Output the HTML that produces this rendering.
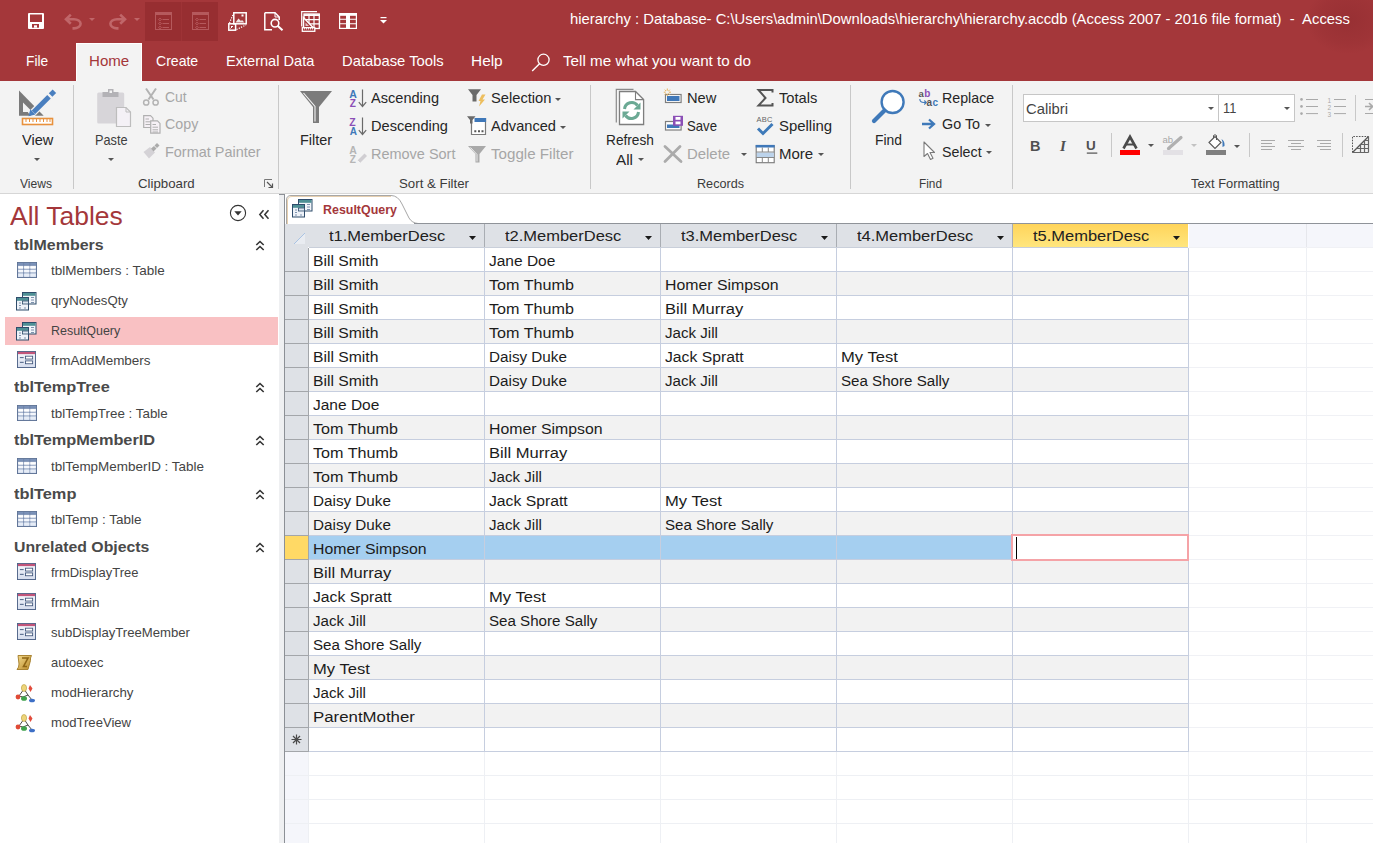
<!DOCTYPE html><html><head><meta charset="utf-8"><style>
html,body{margin:0;padding:0;width:1373px;height:843px;overflow:hidden;background:#fff;position:relative}
body{font-family:"Liberation Sans",sans-serif}
.t{position:absolute;white-space:nowrap}
svg{overflow:visible}
</style></head><body>
<div style="position:absolute;left:0px;top:0px;width:1373px;height:81px;background:#A4373A;"></div>
<div style="position:absolute;left:1290px;top:0;width:83px;height:70px;background:radial-gradient(ellipse 42px 34px at 58px 20px,rgba(120,30,35,0.28),rgba(120,30,35,0.12) 70%,rgba(120,30,35,0) 100%)"></div>
<div style="position:absolute;left:145px;top:2px;width:36px;height:39px;background:#972E31;"></div>
<div style="position:absolute;left:182px;top:2px;width:36px;height:39px;background:#972E31;"></div>
<div class="t" style="left:569.5px;top:12.07px;font-size:14.8px;line-height:14.8px;color:#FFFFFF;transform:scaleX(1.0006);transform-origin:0 0;white-space:pre;">hierarchy : Database- C:\Users\admin\Downloads\hierarchy\hierarchy.accdb (Access 2007 - 2016 file format)  -  Access</div>
<svg style="position:absolute;left:28px;top:13px;" width="16" height="16" viewBox="0 0 16 16"><rect x="0" y="0" width="16" height="16" rx="1" fill="#FFF"/><rect x="2" y="1.5" width="12" height="7.5" fill="#A4373A"/><rect x="4" y="11" width="7" height="3.7" fill="#A4373A"/><rect x="6" y="12.3" width="3" height="2.4" fill="#FFF"/></svg>
<svg style="position:absolute;left:64px;top:13px;" width="19" height="17" viewBox="0 0 19 17"><path d="M6.8 1.6L2 6.2L6.8 10.8M2 6.2H10A6.6 4.6 0 0 1 10 15.4H8.5" fill="none" stroke="#C06669" stroke-width="2.6"/></svg>
<svg style="position:absolute;left:89px;top:18px;" width="6" height="3" viewBox="0 0 6 3"><path d="M0 0H6L3.0 3Z" fill="#C06669"/></svg>
<svg style="position:absolute;left:108px;top:13px;" width="19" height="17" viewBox="0 0 19 17"><path d="M12.2 1.6L17 6.2L12.2 10.8M17 6.2H9A6.6 4.6 0 0 0 9 15.4H10.5" fill="none" stroke="#C06669" stroke-width="2.6"/></svg>
<svg style="position:absolute;left:134px;top:18px;" width="6" height="3" viewBox="0 0 6 3"><path d="M0 0H6L3.0 3Z" fill="#C06669"/></svg>
<div style="position:absolute;left:181px;top:2px;width:1px;height:39px;background:#9E3336;"></div>
<svg style="position:absolute;left:155px;top:12px;" width="17" height="18" viewBox="0 0 17 18"><rect x="0.5" y="0.5" width="16" height="17" fill="none" stroke="#B5595C" stroke-width="1"/><rect x="0.5" y="0.5" width="16" height="2.5" fill="#B5595C"/><path d="M5 6.2l-1.5 1.3L5 8.8l1.5-1.3z M5 10.2l-1.5 1.3L5 12.8l1.5-1.3z M5 14.2l-1.5 1.3L5 16.8l1.5-1.3z" fill="none" stroke="#B5595C" stroke-width="0.9"/><path d="M7.5 7.5H14M7.5 11.5H14M7.5 15.5H14" stroke="#B5595C" stroke-width="1"/></svg>
<svg style="position:absolute;left:192px;top:12px;" width="17" height="18" viewBox="0 0 17 18"><rect x="0.5" y="0.5" width="16" height="17" fill="none" stroke="#B5595C" stroke-width="1"/><rect x="0.5" y="0.5" width="16" height="2.5" fill="#B5595C"/><path d="M5 6.2l-1.5 1.3L5 8.8l1.5-1.3z M5 10.2l-1.5 1.3L5 12.8l1.5-1.3z M5 14.2l-1.5 1.3L5 16.8l1.5-1.3z" fill="none" stroke="#B5595C" stroke-width="0.9"/><path d="M7.5 7.5H14M7.5 11.5H14M7.5 15.5H14" stroke="#B5595C" stroke-width="1"/></svg>
<svg style="position:absolute;left:228px;top:12px;" width="19" height="19" viewBox="0 0 19 19"><rect x="5.8" y="0.8" width="12.4" height="11" fill="none" stroke="#FFF" stroke-width="1.5"/><path d="M7.5 10.5L10.5 6.5L13 9L14 8L16.5 10.5Z" fill="#F2E6E6"/><rect x="13.5" y="2.5" width="2" height="2" fill="#FFF"/><rect x="0.8" y="11.8" width="6.8" height="6.4" fill="none" stroke="#FFF" stroke-width="1.5"/><path d="M2.5 16.5L5 14M3 14.5H5" stroke="#FFF" stroke-width="1"/><path d="M1.5 11L5 2.5M8.5 17.5L18 13" stroke="#FFF" stroke-width="1.2" stroke-dasharray="1.2 1.3"/></svg>
<svg style="position:absolute;left:264px;top:12px;" width="20" height="19" viewBox="0 0 20 19"><path d="M0.8 0.8H11L15.2 5V8M8 17.7H0.8V0.8" fill="none" stroke="#FFF" stroke-width="1.5"/><path d="M11 0.8V5H15.2" fill="none" stroke="#FFF" stroke-width="1"/><circle cx="11" cy="11.2" r="3.8" fill="none" stroke="#FFF" stroke-width="1.6"/><path d="M13.6 13.8L18.5 18.3" stroke="#FFF" stroke-width="2"/></svg>
<svg style="position:absolute;left:301px;top:11px;" width="19" height="21" viewBox="0 0 19 21"><path d="M0.7 15.5V0.7H16" fill="none" stroke="#FFF" stroke-width="1.2"/><rect x="3" y="3" width="15.3" height="14.5" fill="none" stroke="#FFF" stroke-width="1.3"/><path d="M3 3.2H18.3V5H3z" fill="#FFF"/><path d="M3 8.6H18.3M3 12.8H18.3M8 3V17.5M13 3V17.5" stroke="#FFF" stroke-width="1.2"/><path d="M2.5 6.5V17L12.5 17Z" fill="#A4373A" stroke="#FFF" stroke-width="1.5"/><path d="M4.5 11.5V15H8z" fill="#E8C8C8"/><rect x="1.3" y="16.7" width="12.5" height="3.6" fill="#A4373A" stroke="#FFF" stroke-width="1.3"/><path d="M3.5 17V18.5M5.5 17V18.5M7.5 17V18.5M9.5 17V18.5M11.5 17V18.5" stroke="#FFF" stroke-width="0.8"/></svg>
<svg style="position:absolute;left:339px;top:13px;" width="18" height="16" viewBox="0 0 18 16"><rect x="0.6" y="0.6" width="16.8" height="14.8" fill="none" stroke="#FFF" stroke-width="1.2"/><rect x="0.6" y="0.6" width="16.8" height="2.2" fill="#FFF"/><path d="M0.6 6.3H17.4M0.6 10.8H17.4" stroke="#FFF" stroke-width="1.1"/><rect x="7" y="1" width="4" height="14" fill="#FFF"/></svg>
<svg style="position:absolute;left:380px;top:17px;" width="7" height="7" viewBox="0 0 7 7"><rect x="0.5" y="0" width="6" height="1.2" fill="#FFF"/><path d="M0 3H7L3.5 6.5Z" fill="#FFF"/></svg>
<div style="position:absolute;left:76px;top:43px;width:66px;height:38px;background:#F3F3F3;box-sizing:border-box;border:1px solid #FFFFFF;border-bottom:none;"></div>
<div class="t" style="left:25.6px;top:54.27px;font-size:14.8px;line-height:14.8px;color:#FFFFFF;transform:scaleX(0.9267);transform-origin:0 0;">File</div>
<div class="t" style="left:88.6px;top:54.27px;font-size:14.8px;line-height:14.8px;color:#A4373A;transform:scaleX(1.0182);transform-origin:0 0;">Home</div>
<div class="t" style="left:156.3px;top:54.27px;font-size:14.8px;line-height:14.8px;color:#FFFFFF;transform:scaleX(0.9500);transform-origin:0 0;">Create</div>
<div class="t" style="left:226.1px;top:54.27px;font-size:14.8px;line-height:14.8px;color:#FFFFFF;transform:scaleX(0.9847);transform-origin:0 0;">External Data</div>
<div class="t" style="left:342.3px;top:54.27px;font-size:14.8px;line-height:14.8px;color:#FFFFFF;transform:scaleX(0.9995);transform-origin:0 0;">Database Tools</div>
<div class="t" style="left:471.3px;top:54.27px;font-size:14.8px;line-height:14.8px;color:#FFFFFF;transform:scaleX(1.0414);transform-origin:0 0;">Help</div>
<svg style="position:absolute;left:531px;top:53px;" width="20" height="19" viewBox="0 0 20 19"><circle cx="12.5" cy="6.8" r="5.6" fill="none" stroke="#FFF" stroke-width="1.3"/><path d="M8.5 10.8L1.2 18" stroke="#FFF" stroke-width="1.4"/></svg>
<div class="t" style="left:562.8px;top:54.27px;font-size:14.8px;line-height:14.8px;color:#FFFFFF;transform:scaleX(1.0294);transform-origin:0 0;">Tell me what you want to do</div>
<div style="position:absolute;left:0px;top:81px;width:1373px;height:112px;background:#F3F3F3;"></div>
<div style="position:absolute;left:0px;top:193px;width:1373px;height:1px;background:#D6D6D6;"></div>
<div style="position:absolute;left:73px;top:85px;width:1px;height:104px;background:#C8C8C8;"></div>
<div style="position:absolute;left:278px;top:85px;width:1px;height:104px;background:#C8C8C8;"></div>
<div style="position:absolute;left:590px;top:85px;width:1px;height:104px;background:#C8C8C8;"></div>
<div style="position:absolute;left:850px;top:85px;width:1px;height:104px;background:#C8C8C8;"></div>
<div style="position:absolute;left:1012px;top:85px;width:1px;height:104px;background:#C8C8C8;"></div>
<div class="t" style="left:20.2px;top:176.60px;font-size:13px;line-height:13px;color:#3B3B3B;transform:scaleX(0.9290);transform-origin:0 0;">Views</div>
<div class="t" style="left:137.6px;top:176.60px;font-size:13px;line-height:13px;color:#3B3B3B;transform:scaleX(1.0189);transform-origin:0 0;">Clipboard</div>
<div class="t" style="left:399.3px;top:176.60px;font-size:13px;line-height:13px;color:#3B3B3B;transform:scaleX(1.0200);transform-origin:0 0;">Sort &amp; Filter</div>
<div class="t" style="left:697px;top:176.60px;font-size:13px;line-height:13px;color:#3B3B3B;transform:scaleX(0.9709);transform-origin:0 0;">Records</div>
<div class="t" style="left:919.4px;top:176.60px;font-size:13px;line-height:13px;color:#3B3B3B;transform:scaleX(0.9094);transform-origin:0 0;">Find</div>
<div class="t" style="left:1191px;top:176.60px;font-size:13px;line-height:13px;color:#3B3B3B;transform:scaleX(0.9890);transform-origin:0 0;">Text Formatting</div>
<svg style="position:absolute;left:18px;top:88px;" width="38" height="38" viewBox="0 0 38 38"><path d="M1 2.5V27.7H25.7Z" fill="#7A7A7A"/><path d="M5 14.5V24H14.5Z" fill="#F3F3F3"/><path d="M12.5 27.2L34 5.7" stroke="#F3F3F3" stroke-width="7.5"/><path d="M15.5 24.2L31 8.7" stroke="#4A7FBF" stroke-width="5"/><path d="M32.6 7.1L36.4 3.3" stroke="#4A7FBF" stroke-width="5"/><path d="M10.5 28.2L12.3 21.2L17.5 26.4Z" fill="#4A7FBF"/><rect x="4.5" y="30.5" width="30" height="6" fill="#FFFFFF" stroke="#E8913C" stroke-width="1.6"/><path d="M8 31V34M11.5 31V34M15 31V34M18.5 31V34M22 31V34M25.5 31V34M29 31V34M32 31V34" stroke="#E8913C" stroke-width="1"/></svg>
<svg style="position:absolute;left:96px;top:88px;" width="36" height="40" viewBox="0 0 36 40"><rect x="1.2" y="4.5" width="27" height="31" rx="1.5" fill="#D7D5D9"/><path d="M6.5 4H22.5V9H6.5Z" fill="#B3B2B6"/><rect x="12" y="1" width="5.5" height="5" fill="#B3B2B6"/><rect x="13.5" y="2.5" width="2.5" height="2.5" fill="#F3F3F3"/><path d="M20.5 19.5H30L34.5 24V38.5H20.5Z" fill="#F4F1F6" stroke="#BDBDBD" stroke-width="1.2"/><path d="M30 19.5V24H34.5" fill="none" stroke="#BDBDBD" stroke-width="1"/></svg>
<svg style="position:absolute;left:299px;top:90px;" width="34" height="34" viewBox="0 0 34 34"><path d="M1 1H33L20 17V33H14V17Z" fill="#7B7B7B"/><path d="M4.5 3L16 16.5V31.5" fill="none" stroke="#F3F3F3" stroke-width="1.1"/></svg>
<svg style="position:absolute;left:615px;top:88px;" width="31" height="38" viewBox="0 0 31 38"><path d="M1.3 34.5V1.3H18.5" fill="none" stroke="#8A8A8A" stroke-width="1.2"/><path d="M4.5 36.5V3.5H20.5L28.6 11.6V36.5Z" fill="#FFFFFF" stroke="#7E7E7E" stroke-width="1.3"/><path d="M20.5 3.5V11.6H28.6" fill="none" stroke="#7E7E7E" stroke-width="1.1"/><path d="M9.5 21A7.2 7.2 0 0 1 22.5 17.5" fill="none" stroke="#6BA994" stroke-width="3"/><path d="M25.5 14.5V21.5H18.5Z" fill="#6BA994"/><path d="M23.5 24A7.2 7.2 0 0 1 10.5 27.5" fill="none" stroke="#6BA994" stroke-width="3"/><path d="M7.5 30.5V23.5H14.5Z" fill="#6BA994"/></svg>
<svg style="position:absolute;left:870px;top:89px;" width="36" height="36" viewBox="0 0 36 36"><circle cx="22.6" cy="13" r="11" fill="#FFFFFF" stroke="#3F79B9" stroke-width="2.4"/><path d="M14.5 21.5L4 32" stroke="#3F79B9" stroke-width="4.2" stroke-linecap="round"/></svg>
<svg style="position:absolute;left:142px;top:87px;" width="18" height="20" viewBox="0 0 18 20"><path d="M4 1.5L11.5 12.5M14 1.5L6.5 12.5" stroke="#B3B3B3" stroke-width="2"/><circle cx="4.2" cy="15.5" r="2.6" fill="none" stroke="#B3B3B3" stroke-width="1.5"/><circle cx="13.6" cy="15.5" r="2.6" fill="none" stroke="#B3B3B3" stroke-width="1.5"/></svg>
<svg style="position:absolute;left:142px;top:114px;" width="19" height="20" viewBox="0 0 19 20"><path d="M1.7 1.7H8.5L11 4.2V13.5H1.7Z" fill="#F6F1F6" stroke="#B0B0B0" stroke-width="1.2"/><path d="M3.5 5H7M3.5 7.8H9M3.5 10.5H9" stroke="#B0B0B0" stroke-width="1"/><path d="M8.7 6.9H15.5L18 9.4V19.2H8.7Z" fill="#F6F1F6" stroke="#B0B0B0" stroke-width="1.2"/><path d="M10.5 10.5H14M10.5 13.2H16M10.5 15.8H16M10.5 18H16" stroke="#B0B0B0" stroke-width="1"/></svg>
<svg style="position:absolute;left:142px;top:142px;" width="19" height="18" viewBox="0 0 19 18"><path d="M1.5 10L8 5L13 10.5L7 16.5Z" fill="#D4D2D6"/><path d="M9 6.5L12 4L14.5 6.5L11.5 9.5Z" fill="#ABABAB"/><path d="M12.5 3.5L15 1L17.5 3.5L15 6Z" fill="#ABABAB"/></svg>
<svg style="position:absolute;left:349px;top:89px;" width="18" height="19" viewBox="0 0 18 19"><text x="0.3" y="8.5" font-family="Liberation Sans" font-weight="bold" font-size="10.5" fill="#3F79B9">A</text><text x="0.8" y="17.6" font-family="Liberation Sans" font-weight="bold" font-size="10" fill="#8B4FB6">Z</text><path d="M13.5 0.5V17.5M9.8 13.2L13.5 17.5L17.2 13.2" fill="none" stroke="#6A6A6A" stroke-width="1.2"/></svg>
<svg style="position:absolute;left:349px;top:117px;" width="18" height="19" viewBox="0 0 18 19"><text x="0.3" y="8.5" font-family="Liberation Sans" font-weight="bold" font-size="10.5" fill="#8B4FB6">Z</text><text x="0.8" y="17.6" font-family="Liberation Sans" font-weight="bold" font-size="10" fill="#3F79B9">A</text><path d="M13.5 0.5V17.5M9.8 13.2L13.5 17.5L17.2 13.2" fill="none" stroke="#6A6A6A" stroke-width="1.2"/></svg>
<svg style="position:absolute;left:349px;top:145px;" width="18" height="19" viewBox="0 0 18 19"><text x="0.3" y="8.5" font-family="Liberation Sans" font-weight="bold" font-size="10.5" fill="#B5B5B5">A</text><text x="0.8" y="17.6" font-family="Liberation Sans" font-weight="bold" font-size="10" fill="#B5B5B5">Z</text></svg>
<svg style="position:absolute;left:356px;top:151px;" width="12" height="13" viewBox="0 0 12 13"><path d="M1.5 9.5L8.5 2.5L11 5L4 12Z" fill="#D0CED2"/><path d="M1.5 9.5L4 12" stroke="#F3F3F3" stroke-width="1"/></svg>
<svg style="position:absolute;left:467px;top:88px;" width="20" height="20" viewBox="0 0 20 20"><path d="M1 1.3H14L9.5 7V13.5H5.5V7Z" fill="#6A6A6A"/><path d="M15 6.5H18.5L15.5 11.5H18L12 18.5L13.5 13H11.5Z" fill="#EDBE5E"/></svg>
<svg style="position:absolute;left:466px;top:115px;" width="21" height="21" viewBox="0 0 21 21"><path d="M5.5 4V19.5H19.5V3.5H10" fill="#FFFFFF" stroke="#7A7A7A" stroke-width="1.2"/><rect x="8.5" y="3" width="11.6" height="4" fill="#3F78B9"/><path d="M1 1.2H9.5L6.5 5V8.5H4V5Z" fill="#6A6A6A"/><path d="M8.3 16.3H10.3M12 16.3H14M15.5 16.3H17.5" stroke="#555" stroke-width="2"/></svg>
<svg style="position:absolute;left:467px;top:145px;" width="20" height="19" viewBox="0 0 20 19"><path d="M1 1H19L12.5 9V17.5H8.5V9Z" fill="#A9A9A9"/><path d="M3.5 2.5L10 9.5V16.5" fill="none" stroke="#F3F3F3" stroke-width="0.9"/></svg>
<svg style="position:absolute;left:663px;top:88px;" width="20" height="16" viewBox="0 0 20 16"><rect x="2.5" y="6.5" width="15.6" height="8" fill="#FFFFFF" stroke="#7E7E7E" stroke-width="1.2"/><rect x="4" y="8" width="12.5" height="5" fill="#3F78B9"/><path d="M4.3 0.5V8M0.8 4.2H8M1.8 1.7L6.8 6.7M6.8 1.7L1.8 6.7" stroke="#E8B45C" stroke-width="1"/><circle cx="4.3" cy="4.2" r="1.6" fill="#F3F3F3"/></svg>
<svg style="position:absolute;left:663px;top:115px;" width="21" height="17" viewBox="0 0 21 17"><rect x="2.5" y="6.5" width="15.6" height="8.5" fill="#FFFFFF" stroke="#7E7E7E" stroke-width="1.2"/><rect x="4" y="9.5" width="12.5" height="3.5" fill="#3F78B9"/><rect x="10" y="0.8" width="10" height="10" fill="#8B4FB6"/><rect x="12.5" y="2" width="5" height="2.8" fill="#FFFFFF"/><rect x="12.5" y="6.5" width="5" height="2.8" fill="#FFFFFF"/></svg>
<svg style="position:absolute;left:663px;top:145px;" width="20" height="18" viewBox="0 0 20 18"><path d="M2 1.5L18 16.5M17 1.5L2 16.5" stroke="#ABABAB" stroke-width="2.8" stroke-linecap="round"/></svg>
<svg style="position:absolute;left:757px;top:89px;" width="17" height="18" viewBox="0 0 17 18"><path d="M15.5 3.5V1H1.5L8.5 9L1.5 16.5H15.5V14" fill="none" stroke="#555555" stroke-width="2"/></svg>
<svg style="position:absolute;left:756px;top:115px;" width="19" height="21" viewBox="0 0 19 21"><text x="0.5" y="6.8" font-family="Liberation Sans" font-size="7.5" fill="#666" letter-spacing="0.3">ABC</text><path d="M2 13.5L7 18.5L16.5 9" fill="none" stroke="#3E7AB9" stroke-width="3"/></svg>
<svg style="position:absolute;left:755px;top:144px;" width="21" height="20" viewBox="0 0 21 20"><rect x="1.2" y="1.7" width="18" height="17" fill="#FFFFFF" stroke="#777" stroke-width="1.1"/><rect x="0.7" y="0.9" width="19" height="2.6" fill="#3F78B9"/><rect x="1.8" y="8.5" width="17" height="4.5" fill="#BCD3EB"/><path d="M1.2 8H19.2M1.2 13.5H19.2M7.3 3.5V8M13.3 3.5V8M7.3 13.5V18.5M13.3 13.5V18.5" stroke="#888" stroke-width="1"/></svg>
<svg style="position:absolute;left:918px;top:89px;" width="22" height="18" viewBox="0 0 22 18"><text x="0.5" y="8.2" font-family="Liberation Sans" font-weight="bold" font-size="9.5" fill="#555">a</text><text x="6.3" y="8.2" font-family="Liberation Sans" font-weight="bold" font-size="10" fill="#8B4FB6">b</text><path d="M1.8 10Q1.8 13.5 6 13.5H8.3M6.3 11.5L8.3 13.5L6.3 15.5" fill="none" stroke="#3F79B9" stroke-width="1.1"/><text x="8.6" y="17.2" font-family="Liberation Sans" font-weight="bold" font-size="10" fill="#555">a</text><text x="14.4" y="17.2" font-family="Liberation Sans" font-weight="bold" font-size="10" fill="#3F79B9">c</text></svg>
<svg style="position:absolute;left:921px;top:118px;" width="16" height="12" viewBox="0 0 16 12"><path d="M1 6H13M8 1.5L13 6L8 10.5" fill="none" stroke="#3F79B9" stroke-width="2.3"/></svg>
<svg style="position:absolute;left:923px;top:141px;" width="13" height="20" viewBox="0 0 13 20"><path d="M1 1V15.5L4.5 12.5L7.5 18.5L10 17.2L7 11.5H11.5Z" fill="#FFFFFF" stroke="#7A7A7A" stroke-width="1.1" stroke-linejoin="round"/></svg>
<svg style="position:absolute;left:264px;top:179px;" width="10" height="10" viewBox="0 0 10 10"><path d="M0.5 8V0.5H8" fill="none" stroke="#777" stroke-width="1"/><path d="M3 3L8.5 8.5M4.5 8.5H8.5V4.5" fill="none" stroke="#555" stroke-width="1.2"/></svg>
<svg style="position:absolute;left:1030px;top:138px;" width="12" height="13" viewBox="0 0 12 13"><text x="0" y="12.5" font-family="Liberation Sans" font-weight="bold" font-size="14.5" fill="#505050">B</text></svg>
<svg style="position:absolute;left:1060px;top:138px;" width="12" height="13" viewBox="0 0 12 13"><text x="0" y="12.5" font-family="Liberation Serif" font-style="italic" font-weight="bold" font-size="15" fill="#505050">I</text></svg>
<svg style="position:absolute;left:1086px;top:138px;" width="13" height="17" viewBox="0 0 13 17"><text x="0" y="12" font-family="Liberation Sans" font-weight="bold" font-size="13.5" fill="#505050">U</text><rect x="0.8" y="14.5" width="10.5" height="1.2" fill="#505050"/></svg>
<svg style="position:absolute;left:1119px;top:136px;" width="22" height="20" viewBox="0 0 22 20"><path d="M4.5 12.5L11 0.8L17.5 12.5" fill="none" stroke="#4A4A4A" stroke-width="2.6"/><path d="M7 8.5H15" stroke="#4A4A4A" stroke-width="2"/><rect x="1" y="14" width="20" height="5" fill="#FF0000"/></svg>
<svg style="position:absolute;left:1148px;top:144px;" width="6" height="3" viewBox="0 0 6 3"><path d="M0 0H6L3.0 3Z" fill="#555"/></svg>
<svg style="position:absolute;left:1162px;top:135px;" width="23" height="21" viewBox="0 0 23 21"><text x="0.5" y="7.5" font-family="Liberation Sans" font-size="9.5" fill="#A8A8A8">ab</text><path d="M6.5 13.5L19 2.5" stroke="#B0B0B0" stroke-width="3.2" stroke-linecap="round"/><path d="M5 15.5L7 12.5L9 14Z" fill="#B0B0B0"/><rect x="1" y="15" width="20" height="5" fill="#E3E1E5"/></svg>
<svg style="position:absolute;left:1191px;top:144px;" width="6" height="3" viewBox="0 0 6 3"><path d="M0 0H6L3.0 3Z" fill="#C2C2C2"/></svg>
<svg style="position:absolute;left:1205px;top:134px;" width="23" height="22" viewBox="0 0 23 22"><path d="M4 8.5L10 2.5L16 8.5L10 14.5Z" fill="#FFFFFF" stroke="#555" stroke-width="1.1"/><path d="M8.5 4V1.5Q10 0 11.5 1.5V6" fill="none" stroke="#555" stroke-width="1"/><path d="M16.5 5Q20 7 19.5 12L17.5 13V8Z" fill="#3F79B9"/><rect x="1" y="16" width="20" height="5" fill="#7F7F7F"/></svg>
<svg style="position:absolute;left:1234px;top:145px;" width="6" height="3" viewBox="0 0 6 3"><path d="M0 0H6L3.0 3Z" fill="#555"/></svg>
<svg style="position:absolute;left:1261px;top:140px;" width="16" height="10" viewBox="0 0 16 10"><path d="M0 0.5H14" stroke="#A9A9A9" stroke-width="1"/><path d="M0 3.5H11" stroke="#A9A9A9" stroke-width="1"/><path d="M0 6.5H14" stroke="#A9A9A9" stroke-width="1"/><path d="M0 9.5H11" stroke="#A9A9A9" stroke-width="1"/></svg>
<svg style="position:absolute;left:1288px;top:140px;" width="16" height="10" viewBox="0 0 16 10"><path d="M0 0.5H16" stroke="#A9A9A9" stroke-width="1"/><path d="M3 3.5H13" stroke="#A9A9A9" stroke-width="1"/><path d="M0 6.5H16" stroke="#A9A9A9" stroke-width="1"/><path d="M3 9.5H13" stroke="#A9A9A9" stroke-width="1"/></svg>
<svg style="position:absolute;left:1317px;top:140px;" width="16" height="10" viewBox="0 0 16 10"><path d="M0 0.5H14" stroke="#A9A9A9" stroke-width="1"/><path d="M3 3.5H14" stroke="#A9A9A9" stroke-width="1"/><path d="M0 6.5H14" stroke="#A9A9A9" stroke-width="1"/><path d="M3 9.5H14" stroke="#A9A9A9" stroke-width="1"/></svg>
<svg style="position:absolute;left:1352px;top:136px;" width="18" height="18" viewBox="0 0 18 18"><path d="M0.5 16.5V0.5H16.5" fill="none" stroke="#555" stroke-width="1" stroke-dasharray="1.6 1.2"/><path d="M0.5 16.5L16.5 0.5" stroke="#555" stroke-width="1.2"/><path d="M8.5 8.5V16.5M12.5 4.5V16.5M16.5 0.5V16.5M12.5 4.5H16.5M8.5 8.5H16.5M4.5 12.5H16.5M0.5 16.5H16.5" fill="none" stroke="#666" stroke-width="1.2"/></svg>
<svg style="position:absolute;left:1299px;top:97px;" width="20" height="19" viewBox="0 0 20 19"><circle cx="2.5" cy="2.4" r="1.3" fill="#A9A9A9"/><circle cx="2.5" cy="9.4" r="1.3" fill="#A9A9A9"/><circle cx="2.5" cy="16.6" r="1.3" fill="#A9A9A9"/><path d="M7 2.5H19M7 9.5H19M7 16.6H19" stroke="#A9A9A9" stroke-width="1"/></svg>
<svg style="position:absolute;left:1327px;top:96px;" width="20" height="21" viewBox="0 0 20 21"><text x="0.5" y="7" font-family="Liberation Sans" font-size="6.5" fill="#A9A9A9">1</text><text x="0.5" y="13.5" font-family="Liberation Sans" font-size="6.5" fill="#A9A9A9">2</text><text x="0.5" y="20.5" font-family="Liberation Sans" font-size="6.5" fill="#A9A9A9">3</text><path d="M7 3.5H19M7 10.5H19M7 17.6H19" stroke="#A9A9A9" stroke-width="1"/></svg>
<svg style="position:absolute;left:1364px;top:97px;" width="9" height="19" viewBox="0 0 9 19"><path d="M1 2.5H9M1 16.5H9" stroke="#A9A9A9" stroke-width="1"/><path d="M1 9.5H8M5 6L8.5 9.5L5 13" fill="none" stroke="#A9A9A9" stroke-width="1.6"/></svg>
<div class="t" style="left:21.5px;top:132.64px;font-size:14.6px;line-height:14.6px;color:#262626;transform:scaleX(0.9974);transform-origin:0 0;">View</div>
<div class="t" style="left:94.6px;top:132.64px;font-size:14.6px;line-height:14.6px;color:#3E3E3E;transform:scaleX(0.8732);transform-origin:0 0;">Paste</div>
<div class="t" style="left:299.7px;top:132.64px;font-size:14.6px;line-height:14.6px;color:#262626;transform:scaleX(0.9894);transform-origin:0 0;">Filter</div>
<div class="t" style="left:605.7px;top:132.94px;font-size:14.6px;line-height:14.6px;color:#262626;transform:scaleX(0.9370);transform-origin:0 0;">Refresh</div>
<div class="t" style="left:616px;top:152.94px;font-size:14.6px;line-height:14.6px;color:#262626;transform:scaleX(1.0477);transform-origin:0 0;">All</div>
<div class="t" style="left:874.5px;top:132.94px;font-size:14.6px;line-height:14.6px;color:#262626;transform:scaleX(0.9506);transform-origin:0 0;">Find</div>
<svg style="position:absolute;left:34px;top:158px;" width="6" height="3" viewBox="0 0 6 3"><path d="M0 0H6L3.0 3Z" fill="#555"/></svg>
<svg style="position:absolute;left:107.6px;top:158px;" width="6" height="3" viewBox="0 0 6 3"><path d="M0 0H6L3.0 3Z" fill="#555"/></svg>
<svg style="position:absolute;left:638px;top:158px;" width="6" height="3" viewBox="0 0 6 3"><path d="M0 0H6L3.0 3Z" fill="#555"/></svg>
<div class="t" style="left:165.3px;top:90.24px;font-size:14.6px;line-height:14.6px;color:#A6A6A6;transform:scaleX(0.9507);transform-origin:0 0;">Cut</div>
<div class="t" style="left:165.3px;top:116.94px;font-size:14.6px;line-height:14.6px;color:#A6A6A6;transform:scaleX(0.9770);transform-origin:0 0;">Copy</div>
<div class="t" style="left:165.3px;top:144.64px;font-size:14.6px;line-height:14.6px;color:#A6A6A6;transform:scaleX(0.9901);transform-origin:0 0;">Format Painter</div>
<div class="t" style="left:370.5px;top:91.24px;font-size:14.6px;line-height:14.6px;color:#262626;transform:scaleX(0.9988);transform-origin:0 0;">Ascending</div>
<div class="t" style="left:370.5px;top:119.44px;font-size:14.6px;line-height:14.6px;color:#262626;transform:scaleX(0.9986);transform-origin:0 0;">Descending</div>
<div class="t" style="left:370.5px;top:147.24px;font-size:14.6px;line-height:14.6px;color:#A6A6A6;transform:scaleX(0.9918);transform-origin:0 0;">Remove Sort</div>
<div class="t" style="left:490.5px;top:91.14px;font-size:14.6px;line-height:14.6px;color:#262626;transform:scaleX(1.0073);transform-origin:0 0;">Selection</div>
<div class="t" style="left:490.5px;top:119.24px;font-size:14.6px;line-height:14.6px;color:#262626;transform:scaleX(1.0009);transform-origin:0 0;">Advanced</div>
<div class="t" style="left:490.5px;top:147.24px;font-size:14.6px;line-height:14.6px;color:#A6A6A6;transform:scaleX(1.0374);transform-origin:0 0;">Toggle Filter</div>
<svg style="position:absolute;left:555px;top:97.5px;" width="6" height="3" viewBox="0 0 6 3"><path d="M0 0H6L3.0 3Z" fill="#555"/></svg>
<svg style="position:absolute;left:560px;top:125.5px;" width="6" height="3" viewBox="0 0 6 3"><path d="M0 0H6L3.0 3Z" fill="#555"/></svg>
<div class="t" style="left:686.5px;top:91.14px;font-size:14.6px;line-height:14.6px;color:#262626;transform:scaleX(1.0066);transform-origin:0 0;">New</div>
<div class="t" style="left:686.5px;top:119.24px;font-size:14.6px;line-height:14.6px;color:#262626;transform:scaleX(0.9015);transform-origin:0 0;">Save</div>
<div class="t" style="left:686.5px;top:147.24px;font-size:14.6px;line-height:14.6px;color:#A6A6A6;transform:scaleX(1.0212);transform-origin:0 0;">Delete</div>
<svg style="position:absolute;left:741px;top:153px;" width="6" height="3" viewBox="0 0 6 3"><path d="M0 0H6L3.0 3Z" fill="#555"/></svg>
<div class="t" style="left:779.3px;top:91.14px;font-size:14.6px;line-height:14.6px;color:#262626;transform:scaleX(1.0068);transform-origin:0 0;">Totals</div>
<div class="t" style="left:779.3px;top:119.24px;font-size:14.6px;line-height:14.6px;color:#262626;transform:scaleX(1.0221);transform-origin:0 0;">Spelling</div>
<div class="t" style="left:779.3px;top:147.24px;font-size:14.6px;line-height:14.6px;color:#262626;transform:scaleX(1.0281);transform-origin:0 0;">More</div>
<svg style="position:absolute;left:818px;top:153px;" width="6" height="3" viewBox="0 0 6 3"><path d="M0 0H6L3.0 3Z" fill="#555"/></svg>
<div class="t" style="left:942.4px;top:91.14px;font-size:14.6px;line-height:14.6px;color:#262626;transform:scaleX(0.9745);transform-origin:0 0;">Replace</div>
<div class="t" style="left:942.4px;top:117.24px;font-size:14.6px;line-height:14.6px;color:#262626;transform:scaleX(0.9848);transform-origin:0 0;">Go To</div>
<div class="t" style="left:942.4px;top:144.64px;font-size:14.6px;line-height:14.6px;color:#262626;transform:scaleX(0.9759);transform-origin:0 0;">Select</div>
<svg style="position:absolute;left:985px;top:124px;" width="6" height="3" viewBox="0 0 6 3"><path d="M0 0H6L3.0 3Z" fill="#555"/></svg>
<svg style="position:absolute;left:986px;top:151px;" width="6" height="3" viewBox="0 0 6 3"><path d="M0 0H6L3.0 3Z" fill="#555"/></svg>
<div style="position:absolute;left:1023px;top:94px;width:196px;height:28px;background:#FFFFFF;box-sizing:border-box;border:1px solid #C6C6C6;"></div>
<div style="position:absolute;left:1218px;top:94px;width:77px;height:28px;background:#FFFFFF;box-sizing:border-box;border:1px solid #C6C6C6;"></div>
<div class="t" style="left:1026.3px;top:101.64px;font-size:14.6px;line-height:14.6px;color:#444;transform:scaleX(1.0174);transform-origin:0 0;">Calibri</div>
<div class="t" style="left:1223.3px;top:101.34px;font-size:14.6px;line-height:14.6px;color:#444;transform:scaleX(0.8775);transform-origin:0 0;">11</div>
<svg style="position:absolute;left:1208px;top:107px;" width="6" height="3" viewBox="0 0 6 3"><path d="M0 0H6L3.0 3Z" fill="#555"/></svg>
<svg style="position:absolute;left:1284px;top:107px;" width="6" height="3" viewBox="0 0 6 3"><path d="M0 0H6L3.0 3Z" fill="#555"/></svg>
<div style="position:absolute;left:1355px;top:95px;width:1px;height:26px;background:#C8C8C8;"></div>
<div style="position:absolute;left:1111px;top:133px;width:1px;height:24px;background:#C8C8C8;"></div>
<div style="position:absolute;left:1249px;top:133px;width:1px;height:24px;background:#C8C8C8;"></div>
<div style="position:absolute;left:1342px;top:133px;width:1px;height:24px;background:#C8C8C8;"></div>
<div style="position:absolute;left:0px;top:194px;width:279px;height:649px;background:#FFFFFF;"></div>
<div style="position:absolute;left:279px;top:194px;width:5px;height:649px;background:#EFF0F2;"></div>
<div style="position:absolute;left:284px;top:194px;width:1px;height:649px;background:#8C9096;"></div>
<div style="position:absolute;left:279px;top:194px;width:6px;height:1px;background:#8C9096;"></div>
<div class="t" style="left:9.6px;top:203.19px;font-size:26px;line-height:26px;color:#A4373A;transform:scaleX(1.0171);transform-origin:0 0;font-weight:300;">All Tables</div>
<div style="position:absolute;left:5px;top:317px;width:273px;height:28px;background:#F9C1C3;"></div>
<div class="t" style="left:13.5px;top:237.00px;font-size:15px;line-height:15px;color:#4A4A4A;font-weight:bold;transform:scaleX(1.0643);transform-origin:0 0;">tblMembers</div>
<div class="t" style="left:50.8px;top:264.44px;font-size:13.3px;line-height:13.3px;color:#444444;transform:scaleX(1.0141);transform-origin:0 0;">tblMembers : Table</div>
<div class="t" style="left:50.8px;top:294.44px;font-size:13.3px;line-height:13.3px;color:#444444;transform:scaleX(0.9908);transform-origin:0 0;">qryNodesQty</div>
<div class="t" style="left:50.8px;top:324.44px;font-size:13.3px;line-height:13.3px;color:#444444;transform:scaleX(0.9362);transform-origin:0 0;">ResultQuery</div>
<div class="t" style="left:50.8px;top:354.44px;font-size:13.3px;line-height:13.3px;color:#444444;transform:scaleX(1.0132);transform-origin:0 0;">frmAddMembers</div>
<div class="t" style="left:13.5px;top:379.40px;font-size:15px;line-height:15px;color:#4A4A4A;font-weight:bold;transform:scaleX(1.0866);transform-origin:0 0;">tblTempTree</div>
<div class="t" style="left:50.8px;top:406.84px;font-size:13.3px;line-height:13.3px;color:#444444;transform:scaleX(1.0063);transform-origin:0 0;">tblTempTree : Table</div>
<div class="t" style="left:13.5px;top:432.30px;font-size:15px;line-height:15px;color:#4A4A4A;font-weight:bold;transform:scaleX(1.0876);transform-origin:0 0;">tblTempMemberID</div>
<div class="t" style="left:50.8px;top:459.74px;font-size:13.3px;line-height:13.3px;color:#444444;transform:scaleX(1.0113);transform-origin:0 0;">tblTempMemberID : Table</div>
<div class="t" style="left:13.5px;top:485.80px;font-size:15px;line-height:15px;color:#4A4A4A;font-weight:bold;transform:scaleX(1.0906);transform-origin:0 0;">tblTemp</div>
<div class="t" style="left:50.8px;top:513.24px;font-size:13.3px;line-height:13.3px;color:#444444;transform:scaleX(1.0156);transform-origin:0 0;">tblTemp : Table</div>
<div class="t" style="left:13.5px;top:538.80px;font-size:15px;line-height:15px;color:#4A4A4A;font-weight:bold;transform:scaleX(1.0547);transform-origin:0 0;">Unrelated Objects</div>
<div class="t" style="left:50.8px;top:566.24px;font-size:13.3px;line-height:13.3px;color:#444444;transform:scaleX(0.9747);transform-origin:0 0;">frmDisplayTree</div>
<div class="t" style="left:50.8px;top:596.24px;font-size:13.3px;line-height:13.3px;color:#444444;transform:scaleX(1.0118);transform-origin:0 0;">frmMain</div>
<div class="t" style="left:50.8px;top:626.24px;font-size:13.3px;line-height:13.3px;color:#444444;transform:scaleX(0.9880);transform-origin:0 0;">subDisplayTreeMember</div>
<div class="t" style="left:50.8px;top:656.24px;font-size:13.3px;line-height:13.3px;color:#444444;transform:scaleX(0.9707);transform-origin:0 0;">autoexec</div>
<div class="t" style="left:50.8px;top:686.24px;font-size:13.3px;line-height:13.3px;color:#444444;transform:scaleX(0.9966);transform-origin:0 0;">modHierarchy</div>
<div class="t" style="left:50.8px;top:716.24px;font-size:13.3px;line-height:13.3px;color:#444444;transform:scaleX(0.9850);transform-origin:0 0;">modTreeView</div>
<svg style="position:absolute;left:17px;top:262px" width="20" height="16" viewBox="0 0 21 17" preserveAspectRatio="none"><defs><linearGradient id="tg1" x1="0" y1="0" x2="0" y2="1"><stop offset="0" stop-color="#E9EEF7"/><stop offset="1" stop-color="#C7D3E8"/></linearGradient></defs><rect x="0.5" y="0.5" width="20" height="16" fill="url(#tg1)" stroke="#5D7295" stroke-width="1"/><rect x="1" y="1" width="19" height="2.5" fill="#7C93BA"/><path d="M1 3.5H20M1 7.5H20M1 11.5H20M7 1V16M13.5 1V16" stroke="#6D83A8" stroke-width="0.9"/><rect x="1.5" y="4.5" width="5" height="2.5" fill="#FFF"/><rect x="7.5" y="4.5" width="5.5" height="2.5" fill="#FFF"/><rect x="14" y="4.5" width="5.5" height="2.5" fill="#FFF"/><rect x="1.5" y="8.5" width="5" height="2.5" fill="#F4F7FC"/><rect x="7.5" y="8.5" width="5.5" height="2.5" fill="#F4F7FC"/><rect x="14" y="8.5" width="5.5" height="2.5" fill="#F4F7FC"/><rect x="1.5" y="12.5" width="5" height="3" fill="#E6ECF6"/><rect x="7.5" y="12.5" width="5.5" height="3" fill="#E6ECF6"/><rect x="14" y="12.5" width="5.5" height="3" fill="#E6ECF6"/></svg>
<svg style="position:absolute;left:16px;top:292px" width="21" height="19" viewBox="0 0 21 19"><rect x="6.5" y="0.5" width="13.5" height="11.5" fill="#F2F5FA" stroke="#2F4C6B" stroke-width="1"/><rect x="7" y="1" width="12.5" height="2.8" fill="#4E9095"/><path d="M15 5.5H18M15 8H18M15 10.5H18" stroke="#6F87A5" stroke-width="0.9"/><rect x="0.5" y="5.5" width="12" height="12.5" fill="#EEF2F8" stroke="#2F4C6B" stroke-width="1"/><rect x="1" y="6" width="11" height="2.8" fill="#4E9095"/><path d="M3 11H5M8 11H10M3 13.5H5M3 16H5M8 16H10" stroke="#6F87A5" stroke-width="0.9"/><rect x="6.5" y="9" width="6" height="3" fill="#DDE6F0" stroke="#2F4C6B" stroke-width="0.8"/></svg>
<svg style="position:absolute;left:16px;top:322px" width="21" height="19" viewBox="0 0 21 19"><rect x="6.5" y="0.5" width="13.5" height="11.5" fill="#F2F5FA" stroke="#2F4C6B" stroke-width="1"/><rect x="7" y="1" width="12.5" height="2.8" fill="#4E9095"/><path d="M15 5.5H18M15 8H18M15 10.5H18" stroke="#6F87A5" stroke-width="0.9"/><rect x="0.5" y="5.5" width="12" height="12.5" fill="#EEF2F8" stroke="#2F4C6B" stroke-width="1"/><rect x="1" y="6" width="11" height="2.8" fill="#4E9095"/><path d="M3 11H5M8 11H10M3 13.5H5M3 16H5M8 16H10" stroke="#6F87A5" stroke-width="0.9"/><rect x="6.5" y="9" width="6" height="3" fill="#DDE6F0" stroke="#2F4C6B" stroke-width="0.8"/></svg>
<svg style="position:absolute;left:17px;top:351px" width="19" height="17" viewBox="0 0 20 18"><defs><linearGradient id="fg4" x1="0" y1="0" x2="0" y2="1"><stop offset="0" stop-color="#F7F8FC"/><stop offset="1" stop-color="#D6DEEE"/></linearGradient></defs><rect x="0.5" y="0.5" width="19" height="17" fill="url(#fg4)" stroke="#4E6388" stroke-width="1"/><rect x="1" y="1" width="18" height="2.3" fill="#C2557A"/><path d="M3 7H7M3 12H7" stroke="#3F557A" stroke-width="1"/><rect x="9" y="5.5" width="7.5" height="3" fill="#FFF" stroke="#3F557A" stroke-width="0.9"/><rect x="9" y="10.5" width="7.5" height="3" fill="#FFF" stroke="#3F557A" stroke-width="0.9"/></svg>
<svg style="position:absolute;left:17px;top:405px" width="20" height="16" viewBox="0 0 21 17" preserveAspectRatio="none"><defs><linearGradient id="tg5" x1="0" y1="0" x2="0" y2="1"><stop offset="0" stop-color="#E9EEF7"/><stop offset="1" stop-color="#C7D3E8"/></linearGradient></defs><rect x="0.5" y="0.5" width="20" height="16" fill="url(#tg5)" stroke="#5D7295" stroke-width="1"/><rect x="1" y="1" width="19" height="2.5" fill="#7C93BA"/><path d="M1 3.5H20M1 7.5H20M1 11.5H20M7 1V16M13.5 1V16" stroke="#6D83A8" stroke-width="0.9"/><rect x="1.5" y="4.5" width="5" height="2.5" fill="#FFF"/><rect x="7.5" y="4.5" width="5.5" height="2.5" fill="#FFF"/><rect x="14" y="4.5" width="5.5" height="2.5" fill="#FFF"/><rect x="1.5" y="8.5" width="5" height="2.5" fill="#F4F7FC"/><rect x="7.5" y="8.5" width="5.5" height="2.5" fill="#F4F7FC"/><rect x="14" y="8.5" width="5.5" height="2.5" fill="#F4F7FC"/><rect x="1.5" y="12.5" width="5" height="3" fill="#E6ECF6"/><rect x="7.5" y="12.5" width="5.5" height="3" fill="#E6ECF6"/><rect x="14" y="12.5" width="5.5" height="3" fill="#E6ECF6"/></svg>
<svg style="position:absolute;left:17px;top:458px" width="20" height="16" viewBox="0 0 21 17" preserveAspectRatio="none"><defs><linearGradient id="tg6" x1="0" y1="0" x2="0" y2="1"><stop offset="0" stop-color="#E9EEF7"/><stop offset="1" stop-color="#C7D3E8"/></linearGradient></defs><rect x="0.5" y="0.5" width="20" height="16" fill="url(#tg6)" stroke="#5D7295" stroke-width="1"/><rect x="1" y="1" width="19" height="2.5" fill="#7C93BA"/><path d="M1 3.5H20M1 7.5H20M1 11.5H20M7 1V16M13.5 1V16" stroke="#6D83A8" stroke-width="0.9"/><rect x="1.5" y="4.5" width="5" height="2.5" fill="#FFF"/><rect x="7.5" y="4.5" width="5.5" height="2.5" fill="#FFF"/><rect x="14" y="4.5" width="5.5" height="2.5" fill="#FFF"/><rect x="1.5" y="8.5" width="5" height="2.5" fill="#F4F7FC"/><rect x="7.5" y="8.5" width="5.5" height="2.5" fill="#F4F7FC"/><rect x="14" y="8.5" width="5.5" height="2.5" fill="#F4F7FC"/><rect x="1.5" y="12.5" width="5" height="3" fill="#E6ECF6"/><rect x="7.5" y="12.5" width="5.5" height="3" fill="#E6ECF6"/><rect x="14" y="12.5" width="5.5" height="3" fill="#E6ECF6"/></svg>
<svg style="position:absolute;left:17px;top:511px" width="20" height="16" viewBox="0 0 21 17" preserveAspectRatio="none"><defs><linearGradient id="tg7" x1="0" y1="0" x2="0" y2="1"><stop offset="0" stop-color="#E9EEF7"/><stop offset="1" stop-color="#C7D3E8"/></linearGradient></defs><rect x="0.5" y="0.5" width="20" height="16" fill="url(#tg7)" stroke="#5D7295" stroke-width="1"/><rect x="1" y="1" width="19" height="2.5" fill="#7C93BA"/><path d="M1 3.5H20M1 7.5H20M1 11.5H20M7 1V16M13.5 1V16" stroke="#6D83A8" stroke-width="0.9"/><rect x="1.5" y="4.5" width="5" height="2.5" fill="#FFF"/><rect x="7.5" y="4.5" width="5.5" height="2.5" fill="#FFF"/><rect x="14" y="4.5" width="5.5" height="2.5" fill="#FFF"/><rect x="1.5" y="8.5" width="5" height="2.5" fill="#F4F7FC"/><rect x="7.5" y="8.5" width="5.5" height="2.5" fill="#F4F7FC"/><rect x="14" y="8.5" width="5.5" height="2.5" fill="#F4F7FC"/><rect x="1.5" y="12.5" width="5" height="3" fill="#E6ECF6"/><rect x="7.5" y="12.5" width="5.5" height="3" fill="#E6ECF6"/><rect x="14" y="12.5" width="5.5" height="3" fill="#E6ECF6"/></svg>
<svg style="position:absolute;left:17px;top:563px" width="19" height="17" viewBox="0 0 20 18"><defs><linearGradient id="fg8" x1="0" y1="0" x2="0" y2="1"><stop offset="0" stop-color="#F7F8FC"/><stop offset="1" stop-color="#D6DEEE"/></linearGradient></defs><rect x="0.5" y="0.5" width="19" height="17" fill="url(#fg8)" stroke="#4E6388" stroke-width="1"/><rect x="1" y="1" width="18" height="2.3" fill="#C2557A"/><path d="M3 7H7M3 12H7" stroke="#3F557A" stroke-width="1"/><rect x="9" y="5.5" width="7.5" height="3" fill="#FFF" stroke="#3F557A" stroke-width="0.9"/><rect x="9" y="10.5" width="7.5" height="3" fill="#FFF" stroke="#3F557A" stroke-width="0.9"/></svg>
<svg style="position:absolute;left:17px;top:593px" width="19" height="17" viewBox="0 0 20 18"><defs><linearGradient id="fg9" x1="0" y1="0" x2="0" y2="1"><stop offset="0" stop-color="#F7F8FC"/><stop offset="1" stop-color="#D6DEEE"/></linearGradient></defs><rect x="0.5" y="0.5" width="19" height="17" fill="url(#fg9)" stroke="#4E6388" stroke-width="1"/><rect x="1" y="1" width="18" height="2.3" fill="#C2557A"/><path d="M3 7H7M3 12H7" stroke="#3F557A" stroke-width="1"/><rect x="9" y="5.5" width="7.5" height="3" fill="#FFF" stroke="#3F557A" stroke-width="0.9"/><rect x="9" y="10.5" width="7.5" height="3" fill="#FFF" stroke="#3F557A" stroke-width="0.9"/></svg>
<svg style="position:absolute;left:17px;top:623px" width="19" height="17" viewBox="0 0 20 18"><defs><linearGradient id="fg10" x1="0" y1="0" x2="0" y2="1"><stop offset="0" stop-color="#F7F8FC"/><stop offset="1" stop-color="#D6DEEE"/></linearGradient></defs><rect x="0.5" y="0.5" width="19" height="17" fill="url(#fg10)" stroke="#4E6388" stroke-width="1"/><rect x="1" y="1" width="18" height="2.3" fill="#C2557A"/><path d="M3 7H7M3 12H7" stroke="#3F557A" stroke-width="1"/><rect x="9" y="5.5" width="7.5" height="3" fill="#FFF" stroke="#3F557A" stroke-width="0.9"/><rect x="9" y="10.5" width="7.5" height="3" fill="#FFF" stroke="#3F557A" stroke-width="0.9"/></svg>
<svg style="position:absolute;left:16px;top:654px" width="17" height="17" viewBox="0 0 17 17"><defs><linearGradient id="mg11" x1="0" y1="0" x2="1" y2="1"><stop offset="0" stop-color="#F3D98B"/><stop offset="1" stop-color="#B98A2A"/></linearGradient></defs><path d="M2 1.5H15.5Q14 4 14.5 6.5L12 15.5H1Q3 13.5 3 10Z" fill="url(#mg11)" stroke="#A37A25" stroke-width="0.9"/><path d="M6 4H12L7.5 12.5H11" fill="none" stroke="#8E6515" stroke-width="1.6"/></svg>
<svg style="position:absolute;left:14px;top:684px" width="22" height="19" viewBox="0 0 22 19"><path d="M10 5L5 12M10 5L14 11M14 11L9 13M14 11L18 16M5 12L9 13" stroke="#333" stroke-width="0.9"/><ellipse cx="10" cy="4" rx="2.6" ry="3.5" fill="#EED57A" stroke="#B39A3A" stroke-width="0.6"/><path d="M16 1L18.5 4.5L16.5 8L14.5 4.5Z" fill="#E24B3B"/><circle cx="4" cy="13" r="2.4" fill="#E04A36"/><ellipse cx="10" cy="14.5" rx="3" ry="2.3" fill="#3FA24C"/><ellipse cx="18" cy="16.5" rx="3" ry="1.8" fill="#3D6FC6"/></svg>
<svg style="position:absolute;left:14px;top:714px" width="22" height="19" viewBox="0 0 22 19"><path d="M10 5L5 12M10 5L14 11M14 11L9 13M14 11L18 16M5 12L9 13" stroke="#333" stroke-width="0.9"/><ellipse cx="10" cy="4" rx="2.6" ry="3.5" fill="#EED57A" stroke="#B39A3A" stroke-width="0.6"/><path d="M16 1L18.5 4.5L16.5 8L14.5 4.5Z" fill="#E24B3B"/><circle cx="4" cy="13" r="2.4" fill="#E04A36"/><ellipse cx="10" cy="14.5" rx="3" ry="2.3" fill="#3FA24C"/><ellipse cx="18" cy="16.5" rx="3" ry="1.8" fill="#3D6FC6"/></svg>
<svg style="position:absolute;left:255px;top:239.7px;" width="10" height="11" viewBox="0 0 10 11"><path d="M1.3 5L5 1.5L8.7 5M1.3 10L5 6.5L8.7 10" fill="none" stroke="#333" stroke-width="1.6"/></svg>
<svg style="position:absolute;left:255px;top:382.1px;" width="10" height="11" viewBox="0 0 10 11"><path d="M1.3 5L5 1.5L8.7 5M1.3 10L5 6.5L8.7 10" fill="none" stroke="#333" stroke-width="1.6"/></svg>
<svg style="position:absolute;left:255px;top:435px;" width="10" height="11" viewBox="0 0 10 11"><path d="M1.3 5L5 1.5L8.7 5M1.3 10L5 6.5L8.7 10" fill="none" stroke="#333" stroke-width="1.6"/></svg>
<svg style="position:absolute;left:255px;top:488.5px;" width="10" height="11" viewBox="0 0 10 11"><path d="M1.3 5L5 1.5L8.7 5M1.3 10L5 6.5L8.7 10" fill="none" stroke="#333" stroke-width="1.6"/></svg>
<svg style="position:absolute;left:255px;top:541.5px;" width="10" height="11" viewBox="0 0 10 11"><path d="M1.3 5L5 1.5L8.7 5M1.3 10L5 6.5L8.7 10" fill="none" stroke="#333" stroke-width="1.6"/></svg>
<svg style="position:absolute;left:229px;top:204px;" width="18" height="18" viewBox="0 0 18 18"><circle cx="9" cy="9" r="7.6" fill="none" stroke="#333" stroke-width="1.1"/><path d="M5.3 7.2H12.7L9 11.4Z" fill="#333"/></svg>
<svg style="position:absolute;left:258px;top:209px;" width="12" height="11" viewBox="0 0 12 11"><path d="M5.5 1.3L1.8 5.5L5.5 9.7M10.5 1.3L6.8 5.5L10.5 9.7" fill="none" stroke="#333" stroke-width="1.5"/></svg>
<div style="position:absolute;left:285px;top:194px;width:1088px;height:649px;background:#FFFFFF;"></div>
<svg style="position:absolute;left:285px;top:194px;" width="135" height="30" viewBox="0 0 135 30"><path d="M1.5 30V6Q1.5 1.5 6 1.5H106Q113 1.5 117 10L124 24Q127 29 133 29.5H135" fill="#FFFFFF" stroke="#A7A7A7" stroke-width="1"/><path d="M2.5 30V7Q2.5 2.5 7 2.5H106" fill="none" stroke="#E6CFAF" stroke-width="1"/></svg>
<svg style="position:absolute;left:292px;top:199px" width="21" height="19" viewBox="0 0 21 19"><rect x="6.5" y="0.5" width="13.5" height="11.5" fill="#F2F5FA" stroke="#2F4C6B" stroke-width="1"/><rect x="7" y="1" width="12.5" height="2.8" fill="#4E9095"/><path d="M15 5.5H18M15 8H18M15 10.5H18" stroke="#6F87A5" stroke-width="0.9"/><rect x="0.5" y="5.5" width="12" height="12.5" fill="#EEF2F8" stroke="#2F4C6B" stroke-width="1"/><rect x="1" y="6" width="11" height="2.8" fill="#4E9095"/><path d="M3 11H5M8 11H10M3 13.5H5M3 16H5M8 16H10" stroke="#6F87A5" stroke-width="0.9"/><rect x="6.5" y="9" width="6" height="3" fill="#DDE6F0" stroke="#2F4C6B" stroke-width="0.8"/></svg>
<div class="t" style="left:322.7px;top:202.90px;font-size:13px;line-height:13px;color:#A4373A;font-weight:bold;transform:scaleX(0.9560);transform-origin:0 0;">ResultQuery</div>
<div style="position:absolute;left:414px;top:223px;width:959px;height:1px;background:#8F9399;"></div>
<div style="position:absolute;left:285px;top:224px;width:903px;height:23px;background:#DEE1E6;"></div>
<div style="position:absolute;left:1013px;top:224px;width:175px;height:23px;background:linear-gradient(#FFD45A,#FFE67E);"></div>
<div style="position:absolute;left:1189px;top:224px;width:184px;height:23px;background:#F5F6FB;"></div>
<div style="position:absolute;left:1306px;top:224px;width:1px;height:23px;background:#E6E7EC;"></div>
<div style="position:absolute;left:309px;top:247px;width:879px;height:1px;background:#C9CFDA;"></div>
<div style="position:absolute;left:1189px;top:247px;width:184px;height:1px;background:#F0F1F5;"></div>
<svg style="position:absolute;left:293px;top:232px;" width="14" height="14" viewBox="0 0 14 14"><path d="M1 12L12 1V12Z" fill="#E9ECF1"/><path d="M1 12L12 1" stroke="#A9C3E3" stroke-width="1"/></svg>
<div class="t" style="left:329.4px;top:228.46px;font-size:15.4px;line-height:15.4px;color:#222222;transform:scaleX(1.0709);transform-origin:0 0;">t1.MemberDesc</div>
<svg style="position:absolute;left:469px;top:235.5px;" width="7" height="4" viewBox="0 0 7 4"><path d="M0 0H7L3.5 4Z" fill="#1A1A1A"/></svg>
<div class="t" style="left:505.4px;top:228.46px;font-size:15.4px;line-height:15.4px;color:#222222;transform:scaleX(1.0709);transform-origin:0 0;">t2.MemberDesc</div>
<svg style="position:absolute;left:645px;top:235.5px;" width="7" height="4" viewBox="0 0 7 4"><path d="M0 0H7L3.5 4Z" fill="#1A1A1A"/></svg>
<div class="t" style="left:681.4px;top:228.46px;font-size:15.4px;line-height:15.4px;color:#222222;transform:scaleX(1.0709);transform-origin:0 0;">t3.MemberDesc</div>
<svg style="position:absolute;left:821px;top:235.5px;" width="7" height="4" viewBox="0 0 7 4"><path d="M0 0H7L3.5 4Z" fill="#1A1A1A"/></svg>
<div class="t" style="left:857.4px;top:228.46px;font-size:15.4px;line-height:15.4px;color:#222222;transform:scaleX(1.0709);transform-origin:0 0;">t4.MemberDesc</div>
<svg style="position:absolute;left:997px;top:235.5px;" width="7" height="4" viewBox="0 0 7 4"><path d="M0 0H7L3.5 4Z" fill="#1A1A1A"/></svg>
<div class="t" style="left:1033.4px;top:228.46px;font-size:15.4px;line-height:15.4px;color:#222222;transform:scaleX(1.0709);transform-origin:0 0;">t5.MemberDesc</div>
<svg style="position:absolute;left:1173px;top:235.5px;" width="7" height="4" viewBox="0 0 7 4"><path d="M0 0H7L3.5 4Z" fill="#1A1A1A"/></svg>
<div style="position:absolute;left:484px;top:224px;width:1px;height:23px;background:#A9ADB3;"></div>
<div style="position:absolute;left:660px;top:224px;width:1px;height:23px;background:#A9ADB3;"></div>
<div style="position:absolute;left:836px;top:224px;width:1px;height:23px;background:#A9ADB3;"></div>
<div style="position:absolute;left:1012px;top:224px;width:1px;height:23px;background:#A9ADB3;"></div>
<div style="position:absolute;left:308px;top:224px;width:1px;height:23px;background:#DEE1E6;"></div>
<div style="position:absolute;left:285px;top:247px;width:23px;height:1px;background:#DEE1E6;"></div>
<div style="position:absolute;left:309px;top:248px;width:879px;height:23px;background:#FFFFFF;"></div>
<div style="position:absolute;left:285px;top:248px;width:23px;height:23px;background:#DEE1E6;"></div>
<div style="position:absolute;left:285px;top:271px;width:23px;height:1px;background:#A3A6AA;"></div>
<div style="position:absolute;left:309px;top:271px;width:879px;height:1px;background:#C6CEDF;"></div>
<div style="position:absolute;left:309px;top:272px;width:879px;height:23px;background:#F2F2F2;"></div>
<div style="position:absolute;left:285px;top:272px;width:23px;height:23px;background:#DEE1E6;"></div>
<div style="position:absolute;left:285px;top:295px;width:23px;height:1px;background:#A3A6AA;"></div>
<div style="position:absolute;left:309px;top:295px;width:879px;height:1px;background:#C6CEDF;"></div>
<div style="position:absolute;left:309px;top:296px;width:879px;height:23px;background:#FFFFFF;"></div>
<div style="position:absolute;left:285px;top:296px;width:23px;height:23px;background:#DEE1E6;"></div>
<div style="position:absolute;left:285px;top:319px;width:23px;height:1px;background:#A3A6AA;"></div>
<div style="position:absolute;left:309px;top:319px;width:879px;height:1px;background:#C6CEDF;"></div>
<div style="position:absolute;left:309px;top:320px;width:879px;height:23px;background:#F2F2F2;"></div>
<div style="position:absolute;left:285px;top:320px;width:23px;height:23px;background:#DEE1E6;"></div>
<div style="position:absolute;left:285px;top:343px;width:23px;height:1px;background:#A3A6AA;"></div>
<div style="position:absolute;left:309px;top:343px;width:879px;height:1px;background:#C6CEDF;"></div>
<div style="position:absolute;left:309px;top:344px;width:879px;height:23px;background:#FFFFFF;"></div>
<div style="position:absolute;left:285px;top:344px;width:23px;height:23px;background:#DEE1E6;"></div>
<div style="position:absolute;left:285px;top:367px;width:23px;height:1px;background:#A3A6AA;"></div>
<div style="position:absolute;left:309px;top:367px;width:879px;height:1px;background:#C6CEDF;"></div>
<div style="position:absolute;left:309px;top:368px;width:879px;height:23px;background:#F2F2F2;"></div>
<div style="position:absolute;left:285px;top:368px;width:23px;height:23px;background:#DEE1E6;"></div>
<div style="position:absolute;left:285px;top:391px;width:23px;height:1px;background:#A3A6AA;"></div>
<div style="position:absolute;left:309px;top:391px;width:879px;height:1px;background:#C6CEDF;"></div>
<div style="position:absolute;left:309px;top:392px;width:879px;height:23px;background:#FFFFFF;"></div>
<div style="position:absolute;left:285px;top:392px;width:23px;height:23px;background:#DEE1E6;"></div>
<div style="position:absolute;left:285px;top:415px;width:23px;height:1px;background:#A3A6AA;"></div>
<div style="position:absolute;left:309px;top:415px;width:879px;height:1px;background:#C6CEDF;"></div>
<div style="position:absolute;left:309px;top:416px;width:879px;height:23px;background:#F2F2F2;"></div>
<div style="position:absolute;left:285px;top:416px;width:23px;height:23px;background:#DEE1E6;"></div>
<div style="position:absolute;left:285px;top:439px;width:23px;height:1px;background:#A3A6AA;"></div>
<div style="position:absolute;left:309px;top:439px;width:879px;height:1px;background:#C6CEDF;"></div>
<div style="position:absolute;left:309px;top:440px;width:879px;height:23px;background:#FFFFFF;"></div>
<div style="position:absolute;left:285px;top:440px;width:23px;height:23px;background:#DEE1E6;"></div>
<div style="position:absolute;left:285px;top:463px;width:23px;height:1px;background:#A3A6AA;"></div>
<div style="position:absolute;left:309px;top:463px;width:879px;height:1px;background:#C6CEDF;"></div>
<div style="position:absolute;left:309px;top:464px;width:879px;height:23px;background:#F2F2F2;"></div>
<div style="position:absolute;left:285px;top:464px;width:23px;height:23px;background:#DEE1E6;"></div>
<div style="position:absolute;left:285px;top:487px;width:23px;height:1px;background:#A3A6AA;"></div>
<div style="position:absolute;left:309px;top:487px;width:879px;height:1px;background:#C6CEDF;"></div>
<div style="position:absolute;left:309px;top:488px;width:879px;height:23px;background:#FFFFFF;"></div>
<div style="position:absolute;left:285px;top:488px;width:23px;height:23px;background:#DEE1E6;"></div>
<div style="position:absolute;left:285px;top:511px;width:23px;height:1px;background:#A3A6AA;"></div>
<div style="position:absolute;left:309px;top:511px;width:879px;height:1px;background:#C6CEDF;"></div>
<div style="position:absolute;left:309px;top:512px;width:879px;height:23px;background:#F2F2F2;"></div>
<div style="position:absolute;left:285px;top:512px;width:23px;height:23px;background:#DEE1E6;"></div>
<div style="position:absolute;left:285px;top:535px;width:23px;height:1px;background:#A3A6AA;"></div>
<div style="position:absolute;left:309px;top:535px;width:879px;height:1px;background:#C6CEDF;"></div>
<div style="position:absolute;left:309px;top:536px;width:879px;height:23px;background:#FFFFFF;"></div>
<div style="position:absolute;left:285px;top:536px;width:23px;height:23px;background:#DEE1E6;"></div>
<div style="position:absolute;left:285px;top:559px;width:23px;height:1px;background:#A3A6AA;"></div>
<div style="position:absolute;left:309px;top:559px;width:879px;height:1px;background:#C6CEDF;"></div>
<div style="position:absolute;left:309px;top:560px;width:879px;height:23px;background:#F2F2F2;"></div>
<div style="position:absolute;left:285px;top:560px;width:23px;height:23px;background:#DEE1E6;"></div>
<div style="position:absolute;left:285px;top:583px;width:23px;height:1px;background:#A3A6AA;"></div>
<div style="position:absolute;left:309px;top:583px;width:879px;height:1px;background:#C6CEDF;"></div>
<div style="position:absolute;left:309px;top:584px;width:879px;height:23px;background:#FFFFFF;"></div>
<div style="position:absolute;left:285px;top:584px;width:23px;height:23px;background:#DEE1E6;"></div>
<div style="position:absolute;left:285px;top:607px;width:23px;height:1px;background:#A3A6AA;"></div>
<div style="position:absolute;left:309px;top:607px;width:879px;height:1px;background:#C6CEDF;"></div>
<div style="position:absolute;left:309px;top:608px;width:879px;height:23px;background:#F2F2F2;"></div>
<div style="position:absolute;left:285px;top:608px;width:23px;height:23px;background:#DEE1E6;"></div>
<div style="position:absolute;left:285px;top:631px;width:23px;height:1px;background:#A3A6AA;"></div>
<div style="position:absolute;left:309px;top:631px;width:879px;height:1px;background:#C6CEDF;"></div>
<div style="position:absolute;left:309px;top:632px;width:879px;height:23px;background:#FFFFFF;"></div>
<div style="position:absolute;left:285px;top:632px;width:23px;height:23px;background:#DEE1E6;"></div>
<div style="position:absolute;left:285px;top:655px;width:23px;height:1px;background:#A3A6AA;"></div>
<div style="position:absolute;left:309px;top:655px;width:879px;height:1px;background:#C6CEDF;"></div>
<div style="position:absolute;left:309px;top:656px;width:879px;height:23px;background:#F2F2F2;"></div>
<div style="position:absolute;left:285px;top:656px;width:23px;height:23px;background:#DEE1E6;"></div>
<div style="position:absolute;left:285px;top:679px;width:23px;height:1px;background:#A3A6AA;"></div>
<div style="position:absolute;left:309px;top:679px;width:879px;height:1px;background:#C6CEDF;"></div>
<div style="position:absolute;left:309px;top:680px;width:879px;height:23px;background:#FFFFFF;"></div>
<div style="position:absolute;left:285px;top:680px;width:23px;height:23px;background:#DEE1E6;"></div>
<div style="position:absolute;left:285px;top:703px;width:23px;height:1px;background:#A3A6AA;"></div>
<div style="position:absolute;left:309px;top:703px;width:879px;height:1px;background:#C6CEDF;"></div>
<div style="position:absolute;left:309px;top:704px;width:879px;height:23px;background:#F2F2F2;"></div>
<div style="position:absolute;left:285px;top:704px;width:23px;height:23px;background:#DEE1E6;"></div>
<div style="position:absolute;left:285px;top:727px;width:23px;height:1px;background:#A3A6AA;"></div>
<div style="position:absolute;left:309px;top:727px;width:879px;height:1px;background:#C6CEDF;"></div>
<div style="position:absolute;left:309px;top:728px;width:879px;height:23px;background:#FFFFFF;"></div>
<div style="position:absolute;left:285px;top:728px;width:23px;height:23px;background:#DEE1E6;"></div>
<div style="position:absolute;left:285px;top:751px;width:23px;height:1px;background:#A3A6AA;"></div>
<div style="position:absolute;left:309px;top:751px;width:879px;height:1px;background:#C6CEDF;"></div>
<div style="position:absolute;left:285px;top:536px;width:23px;height:23px;background:#FFD965;"></div>
<div style="position:absolute;left:309px;top:536px;width:703px;height:23px;background:#A5CFF0;"></div>
<div style="position:absolute;left:308px;top:248px;width:1px;height:504px;background:#A3A6AA;"></div>
<div style="position:absolute;left:484px;top:248px;width:1px;height:504px;background:#C6CEDF;"></div>
<div style="position:absolute;left:660px;top:248px;width:1px;height:504px;background:#C6CEDF;"></div>
<div style="position:absolute;left:836px;top:248px;width:1px;height:504px;background:#C6CEDF;"></div>
<div style="position:absolute;left:1012px;top:248px;width:1px;height:504px;background:#C6CEDF;"></div>
<div style="position:absolute;left:1188px;top:248px;width:1px;height:504px;background:#C6CEDF;"></div>
<div class="t" style="left:313px;top:253.16px;font-size:15.4px;line-height:15.4px;color:#1C1C1C;transform:scaleX(1.0205);transform-origin:0 0;">Bill Smith</div>
<div class="t" style="left:489px;top:253.16px;font-size:15.4px;line-height:15.4px;color:#1C1C1C;transform:scaleX(1.0072);transform-origin:0 0;">Jane Doe</div>
<div class="t" style="left:313px;top:277.16px;font-size:15.4px;line-height:15.4px;color:#1C1C1C;transform:scaleX(1.0205);transform-origin:0 0;">Bill Smith</div>
<div class="t" style="left:489px;top:277.16px;font-size:15.4px;line-height:15.4px;color:#1C1C1C;transform:scaleX(1.0491);transform-origin:0 0;">Tom Thumb</div>
<div class="t" style="left:665px;top:277.16px;font-size:15.4px;line-height:15.4px;color:#1C1C1C;transform:scaleX(1.0289);transform-origin:0 0;">Homer Simpson</div>
<div class="t" style="left:313px;top:301.16px;font-size:15.4px;line-height:15.4px;color:#1C1C1C;transform:scaleX(1.0205);transform-origin:0 0;">Bill Smith</div>
<div class="t" style="left:489px;top:301.16px;font-size:15.4px;line-height:15.4px;color:#1C1C1C;transform:scaleX(1.0491);transform-origin:0 0;">Tom Thumb</div>
<div class="t" style="left:665px;top:301.16px;font-size:15.4px;line-height:15.4px;color:#1C1C1C;transform:scaleX(1.0752);transform-origin:0 0;">Bill Murray</div>
<div class="t" style="left:313px;top:325.16px;font-size:15.4px;line-height:15.4px;color:#1C1C1C;transform:scaleX(1.0205);transform-origin:0 0;">Bill Smith</div>
<div class="t" style="left:489px;top:325.16px;font-size:15.4px;line-height:15.4px;color:#1C1C1C;transform:scaleX(1.0491);transform-origin:0 0;">Tom Thumb</div>
<div class="t" style="left:665px;top:325.16px;font-size:15.4px;line-height:15.4px;color:#1C1C1C;transform:scaleX(0.9813);transform-origin:0 0;">Jack Jill</div>
<div class="t" style="left:313px;top:349.16px;font-size:15.4px;line-height:15.4px;color:#1C1C1C;transform:scaleX(1.0205);transform-origin:0 0;">Bill Smith</div>
<div class="t" style="left:489px;top:349.16px;font-size:15.4px;line-height:15.4px;color:#1C1C1C;transform:scaleX(0.9906);transform-origin:0 0;">Daisy Duke</div>
<div class="t" style="left:665px;top:349.16px;font-size:15.4px;line-height:15.4px;color:#1C1C1C;transform:scaleX(1.0217);transform-origin:0 0;">Jack Spratt</div>
<div class="t" style="left:841px;top:349.16px;font-size:15.4px;line-height:15.4px;color:#1C1C1C;transform:scaleX(1.0763);transform-origin:0 0;">My Test</div>
<div class="t" style="left:313px;top:373.16px;font-size:15.4px;line-height:15.4px;color:#1C1C1C;transform:scaleX(1.0205);transform-origin:0 0;">Bill Smith</div>
<div class="t" style="left:489px;top:373.16px;font-size:15.4px;line-height:15.4px;color:#1C1C1C;transform:scaleX(0.9906);transform-origin:0 0;">Daisy Duke</div>
<div class="t" style="left:665px;top:373.16px;font-size:15.4px;line-height:15.4px;color:#1C1C1C;transform:scaleX(0.9813);transform-origin:0 0;">Jack Jill</div>
<div class="t" style="left:841px;top:373.16px;font-size:15.4px;line-height:15.4px;color:#1C1C1C;transform:scaleX(0.9825);transform-origin:0 0;">Sea Shore Sally</div>
<div class="t" style="left:313px;top:397.16px;font-size:15.4px;line-height:15.4px;color:#1C1C1C;transform:scaleX(1.0072);transform-origin:0 0;">Jane Doe</div>
<div class="t" style="left:313px;top:421.16px;font-size:15.4px;line-height:15.4px;color:#1C1C1C;transform:scaleX(1.0491);transform-origin:0 0;">Tom Thumb</div>
<div class="t" style="left:489px;top:421.16px;font-size:15.4px;line-height:15.4px;color:#1C1C1C;transform:scaleX(1.0289);transform-origin:0 0;">Homer Simpson</div>
<div class="t" style="left:313px;top:445.16px;font-size:15.4px;line-height:15.4px;color:#1C1C1C;transform:scaleX(1.0491);transform-origin:0 0;">Tom Thumb</div>
<div class="t" style="left:489px;top:445.16px;font-size:15.4px;line-height:15.4px;color:#1C1C1C;transform:scaleX(1.0752);transform-origin:0 0;">Bill Murray</div>
<div class="t" style="left:313px;top:469.16px;font-size:15.4px;line-height:15.4px;color:#1C1C1C;transform:scaleX(1.0491);transform-origin:0 0;">Tom Thumb</div>
<div class="t" style="left:489px;top:469.16px;font-size:15.4px;line-height:15.4px;color:#1C1C1C;transform:scaleX(0.9813);transform-origin:0 0;">Jack Jill</div>
<div class="t" style="left:313px;top:493.16px;font-size:15.4px;line-height:15.4px;color:#1C1C1C;transform:scaleX(0.9906);transform-origin:0 0;">Daisy Duke</div>
<div class="t" style="left:489px;top:493.16px;font-size:15.4px;line-height:15.4px;color:#1C1C1C;transform:scaleX(1.0217);transform-origin:0 0;">Jack Spratt</div>
<div class="t" style="left:665px;top:493.16px;font-size:15.4px;line-height:15.4px;color:#1C1C1C;transform:scaleX(1.0763);transform-origin:0 0;">My Test</div>
<div class="t" style="left:313px;top:517.16px;font-size:15.4px;line-height:15.4px;color:#1C1C1C;transform:scaleX(0.9906);transform-origin:0 0;">Daisy Duke</div>
<div class="t" style="left:489px;top:517.16px;font-size:15.4px;line-height:15.4px;color:#1C1C1C;transform:scaleX(0.9813);transform-origin:0 0;">Jack Jill</div>
<div class="t" style="left:665px;top:517.16px;font-size:15.4px;line-height:15.4px;color:#1C1C1C;transform:scaleX(0.9825);transform-origin:0 0;">Sea Shore Sally</div>
<div class="t" style="left:313px;top:541.16px;font-size:15.4px;line-height:15.4px;color:#1C1C1C;transform:scaleX(1.0289);transform-origin:0 0;">Homer Simpson</div>
<div class="t" style="left:313px;top:565.16px;font-size:15.4px;line-height:15.4px;color:#1C1C1C;transform:scaleX(1.0752);transform-origin:0 0;">Bill Murray</div>
<div class="t" style="left:313px;top:589.16px;font-size:15.4px;line-height:15.4px;color:#1C1C1C;transform:scaleX(1.0217);transform-origin:0 0;">Jack Spratt</div>
<div class="t" style="left:489px;top:589.16px;font-size:15.4px;line-height:15.4px;color:#1C1C1C;transform:scaleX(1.0763);transform-origin:0 0;">My Test</div>
<div class="t" style="left:313px;top:613.16px;font-size:15.4px;line-height:15.4px;color:#1C1C1C;transform:scaleX(0.9813);transform-origin:0 0;">Jack Jill</div>
<div class="t" style="left:489px;top:613.16px;font-size:15.4px;line-height:15.4px;color:#1C1C1C;transform:scaleX(0.9825);transform-origin:0 0;">Sea Shore Sally</div>
<div class="t" style="left:313px;top:637.16px;font-size:15.4px;line-height:15.4px;color:#1C1C1C;transform:scaleX(0.9825);transform-origin:0 0;">Sea Shore Sally</div>
<div class="t" style="left:313px;top:661.16px;font-size:15.4px;line-height:15.4px;color:#1C1C1C;transform:scaleX(1.0763);transform-origin:0 0;">My Test</div>
<div class="t" style="left:313px;top:685.16px;font-size:15.4px;line-height:15.4px;color:#1C1C1C;transform:scaleX(0.9813);transform-origin:0 0;">Jack Jill</div>
<div class="t" style="left:313px;top:709.16px;font-size:15.4px;line-height:15.4px;color:#1C1C1C;transform:scaleX(1.0932);transform-origin:0 0;">ParentMother</div>
<div style="position:absolute;left:1011px;top:534px;width:178px;height:27px;background:#FFFFFF;box-sizing:border-box;border:2px solid #F5A3A7;"></div>
<div style="position:absolute;left:1016px;top:537px;width:1px;height:22px;background:#000000;"></div>
<svg style="position:absolute;left:291px;top:734px;" width="11" height="11" viewBox="0 0 11 11"><path d="M5.5 0.5V10.5M0.5 5.5H10.5M2 2L9 9M9 2L2 9" stroke="#4A4A4A" stroke-width="1.2"/></svg>
<div style="position:absolute;left:285px;top:752px;width:23px;height:23px;background:#F5F6FB;"></div>
<div style="position:absolute;left:285px;top:775px;width:1088px;height:1px;background:#EEF0F4;"></div>
<div style="position:absolute;left:285px;top:776px;width:23px;height:23px;background:#F5F6FB;"></div>
<div style="position:absolute;left:285px;top:799px;width:1088px;height:1px;background:#EEF0F4;"></div>
<div style="position:absolute;left:285px;top:800px;width:23px;height:23px;background:#F5F6FB;"></div>
<div style="position:absolute;left:285px;top:823px;width:1088px;height:1px;background:#EEF0F4;"></div>
<div style="position:absolute;left:285px;top:824px;width:23px;height:23px;background:#F5F6FB;"></div>
<div style="position:absolute;left:285px;top:847px;width:1088px;height:1px;background:#EEF0F4;"></div>
<div style="position:absolute;left:308px;top:752px;width:1px;height:91px;background:#EEF0F4;"></div>
<div style="position:absolute;left:484px;top:752px;width:1px;height:91px;background:#EEF0F4;"></div>
<div style="position:absolute;left:660px;top:752px;width:1px;height:91px;background:#EEF0F4;"></div>
<div style="position:absolute;left:836px;top:752px;width:1px;height:91px;background:#EEF0F4;"></div>
<div style="position:absolute;left:1012px;top:752px;width:1px;height:91px;background:#EEF0F4;"></div>
<div style="position:absolute;left:1188px;top:752px;width:1px;height:91px;background:#EEF0F4;"></div>
<div style="position:absolute;left:1306px;top:752px;width:1px;height:91px;background:#EEF0F4;"></div>
<div style="position:absolute;left:1189px;top:271px;width:184px;height:1px;background:#F0F1F5;"></div>
<div style="position:absolute;left:1189px;top:295px;width:184px;height:1px;background:#F0F1F5;"></div>
<div style="position:absolute;left:1189px;top:319px;width:184px;height:1px;background:#F0F1F5;"></div>
<div style="position:absolute;left:1189px;top:343px;width:184px;height:1px;background:#F0F1F5;"></div>
<div style="position:absolute;left:1189px;top:367px;width:184px;height:1px;background:#F0F1F5;"></div>
<div style="position:absolute;left:1189px;top:391px;width:184px;height:1px;background:#F0F1F5;"></div>
<div style="position:absolute;left:1189px;top:415px;width:184px;height:1px;background:#F0F1F5;"></div>
<div style="position:absolute;left:1189px;top:439px;width:184px;height:1px;background:#F0F1F5;"></div>
<div style="position:absolute;left:1189px;top:463px;width:184px;height:1px;background:#F0F1F5;"></div>
<div style="position:absolute;left:1189px;top:487px;width:184px;height:1px;background:#F0F1F5;"></div>
<div style="position:absolute;left:1189px;top:511px;width:184px;height:1px;background:#F0F1F5;"></div>
<div style="position:absolute;left:1189px;top:535px;width:184px;height:1px;background:#F0F1F5;"></div>
<div style="position:absolute;left:1189px;top:559px;width:184px;height:1px;background:#F0F1F5;"></div>
<div style="position:absolute;left:1189px;top:583px;width:184px;height:1px;background:#F0F1F5;"></div>
<div style="position:absolute;left:1189px;top:607px;width:184px;height:1px;background:#F0F1F5;"></div>
<div style="position:absolute;left:1189px;top:631px;width:184px;height:1px;background:#F0F1F5;"></div>
<div style="position:absolute;left:1189px;top:655px;width:184px;height:1px;background:#F0F1F5;"></div>
<div style="position:absolute;left:1189px;top:679px;width:184px;height:1px;background:#F0F1F5;"></div>
<div style="position:absolute;left:1189px;top:703px;width:184px;height:1px;background:#F0F1F5;"></div>
<div style="position:absolute;left:1189px;top:727px;width:184px;height:1px;background:#F0F1F5;"></div>
<div style="position:absolute;left:1189px;top:751px;width:184px;height:1px;background:#F0F1F5;"></div>
<div style="position:absolute;left:1306px;top:248px;width:1px;height:504px;background:#EEF0F4;"></div>
</body></html>
